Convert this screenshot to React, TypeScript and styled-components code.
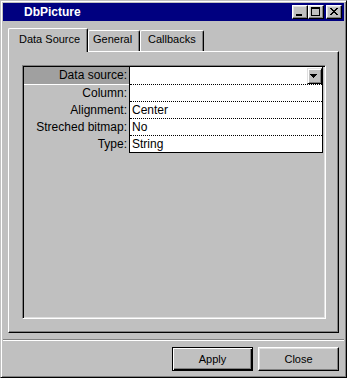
import React from 'react';
import styled, { createGlobalStyle } from 'styled-components';

const GlobalStyle = createGlobalStyle`
    html, body {
        margin: 0;
        padding: 0;
        background: #c0c0c0;
    }

    body {
        font-family: "Liberation Sans", Arial, sans-serif;
        color: #000;
    }
`;

const Window = styled.div`
    width: 347px;
    height: 378px;
    box-sizing: border-box;
    padding: 2px;

    display: flex;
    flex-direction: column;

    background: #c0c0c0;
    border: 1px solid;
    border-color: #c0c0c0 #000 #000 #c0c0c0;
    box-shadow: inset 1px 1px #fff, inset -1px -1px #808080;
`;

const TitleBar = styled.div`
    height: 18px;
    display: flex;
    align-items: center;
    padding: 0 2px 0 21px;

    background: #000080;
    color: #fff;
    font-size: 12px;
    font-weight: bold;
`;

const TitleText = styled.span`
    flex: 1;
    line-height: 18px;
`;

const CaptionButton = styled.button<{ $gap?: boolean }>`
    width: 16px;
    height: 14px;
    padding: 0;
    margin-left: ${(p) => (p.$gap ? '2px' : '0')};
    box-sizing: border-box;

    display: flex;

    background: #c0c0c0;
    border: 1px solid;
    border-color: #fff #000 #000 #fff;
    box-shadow: inset -1px -1px #808080, inset 1px 1px #dfdfdf;

    svg {
        display: block;
        shape-rendering: crispEdges;
    }
`;

const Body = styled.div`
    padding: 7px 5px 0 5px;
    display: flex;
    flex-direction: column;
`;

const TabStrip = styled.div`
    height: 23px;
    display: flex;
    align-items: flex-end;
`;

const Tab = styled.div<{ $active?: boolean; $width: number; $pad: number }>`
    position: relative;
    z-index: ${(p) => (p.$active ? 1 : 0)};
    width: ${(p) => p.$width}px;
    height: ${(p) => (p.$active ? 24 : 21)}px;
    margin-bottom: ${(p) => (p.$active ? '-1px' : '0')};
    box-sizing: border-box;
    padding: ${(p) => (p.$active ? 4 : 2)}px 0 0 ${(p) => p.$pad}px;

    background: #c0c0c0;
    border: 1px solid;
    border-color: #fff #000 transparent #fff;
    border-bottom: none;
    border-radius: 2px 2px 0 0;
    box-shadow: inset -1px 0 #808080;

    font-size: 11px;
    line-height: 13px;
    white-space: nowrap;
`;

const Panel = styled.div`
    box-sizing: border-box;
    padding: 13px 12px 13px 13px;

    background: #c0c0c0;
    border: 1px solid;
    border-color: #fff #000 #000 #fff;
    box-shadow: inset -1px -1px #808080;
`;

const Sunken = styled.div`
    height: 254px;
    box-sizing: border-box;
    padding: 1px;

    background: #c0c0c0;
    border: 1px solid;
    border-color: #808080 #fff #fff #808080;
    box-shadow: inset 1px 1px #000, inset -1px -1px #dfdfdf;
`;

const PropertyGrid = styled.div`
    display: grid;
    grid-template-columns: 105px 194px;
    font-size: 12px;
`;

const LabelColumn = styled.div`
    display: flex;
    flex-direction: column;
`;

const LabelCell = styled.div<{ $selected?: boolean; $first?: boolean }>`
    height: ${(p) => (p.$first ? 18 : 17)}px;
    box-sizing: border-box;
    padding-right: 2px;
    text-align: right;
    line-height: ${(p) => (p.$first ? 17 : 16)}px;
    white-space: nowrap;

    background: ${(p) => (p.$selected ? '#a0a0a0' : 'transparent')};
    border-bottom: 1px solid ${(p) => (p.$selected ? '#fff' : 'transparent')};
    margin-left: ${(p) => (p.$selected ? '0' : '0')};
`;

const ValueColumn = styled.div`
    display: flex;
    flex-direction: column;
    align-self: start;
    background: #fff;
    border: 1px solid #000;
    border-top: none;
`;

const ValueCell = styled.div<{ $first?: boolean; $last?: boolean }>`
    height: ${(p) => (p.$first ? 18 : p.$last ? 16 : 17)}px;
    box-sizing: border-box;
    padding-left: 2px;
    display: flex;
    align-items: flex-start;
    justify-content: space-between;

    line-height: ${(p) => (p.$first ? 17 : 16)}px;
    border-bottom: ${(p) => (p.$last ? 'none' : '1px dotted #000')};
`;

const ComboButton = styled.div`
    width: 15px;
    height: 16px;
    margin-top: 1px;
    box-sizing: border-box;

    background: #c0c0c0;
    border: 1px solid;
    border-color: #dfdfdf #000 #000 #dfdfdf;
    box-shadow: inset 1px 1px #fff, inset -1px -1px #808080;

    svg {
        display: block;
        shape-rendering: crispEdges;
    }
`;

const Separator = styled.div`
    margin-top: 6px;
    border-top: 1px solid #808080;
    border-bottom: 1px solid #fff;
`;

const ButtonRow = styled.div`
    padding: 6px 5px 0 0;
    display: flex;
    justify-content: flex-end;
    gap: 5px;
`;

const PushButton = styled.button<{ $default?: boolean }>`
    width: 81px;
    height: 24px;
    padding: 0;
    box-sizing: border-box;

    background: #c0c0c0;
    border: 1px solid;
    border-color: ${(p) => (p.$default ? '#000' : '#fff #000 #000 #fff')};
    box-shadow: ${(p) =>
        p.$default
            ? 'inset 1px 1px #fff, inset -1px -1px #000, inset -2px -2px #808080'
            : 'inset -1px -1px #808080, inset 1px 1px #dfdfdf'};

    font-family: "Liberation Sans", Arial, sans-serif;
    font-size: 11px;
    color: #000;
`;

const MinimizeIcon = () => (
    <svg width="14" height="12" viewBox="0 0 14 12">
        <rect x="3" y="8" width="6" height="2" fill="#000" />
    </svg>
);

const MaximizeIcon = () => (
    <svg width="14" height="12" viewBox="0 0 14 12">
        <rect x="2" y="1" width="9" height="2" fill="#000" />
        <rect x="2" y="3" width="1" height="7" fill="#000" />
        <rect x="10" y="3" width="1" height="7" fill="#000" />
        <rect x="2" y="9" width="9" height="1" fill="#000" />
    </svg>
);

const closeRows = [
    [0, 6],
    [1, 5],
    [2, 4],
    [3, 3],
    [2, 4],
    [1, 5],
    [0, 6],
];

const CloseIcon = () => (
    <svg width="14" height="12" viewBox="0 0 14 12">
        {closeRows.map(([a, b], i) =>
            a === b ? (
                <rect key={i} x={3 + a} y={2 + i} width="2" height="1" fill="#000" />
            ) : (
                <React.Fragment key={i}>
                    <rect x={3 + a} y={2 + i} width="2" height="1" fill="#000" />
                    <rect x={3 + b} y={2 + i} width="2" height="1" fill="#000" />
                </React.Fragment>
            ),
        )}
    </svg>
);

const DownArrow = () => (
    <svg width="13" height="14" viewBox="0 0 13 14">
        <rect x="2" y="5" width="7" height="1" fill="#000" />
        <rect x="3" y="6" width="5" height="1" fill="#000" />
        <rect x="4" y="7" width="3" height="1" fill="#000" />
        <rect x="5" y="8" width="1" height="1" fill="#000" />
    </svg>
);

const tabs = [
    { title: 'Data Source', width: 80, pad: 10 },
    { title: 'General', width: 52, pad: 4 },
    { title: 'Callbacks', width: 64, pad: 7 },
];

const rows = [
    { label: 'Data source:', value: '', combo: true },
    { label: 'Column:', value: '' },
    { label: 'Alignment:', value: 'Center' },
    { label: 'Streched bitmap:', value: 'No' },
    { label: 'Type:', value: 'String' },
];

const App = (): React.ReactElement => {
    return (
        <>
            <GlobalStyle />
            <Window>
                <TitleBar>
                    <TitleText>DbPicture</TitleText>
                    <CaptionButton>
                        <MinimizeIcon />
                    </CaptionButton>
                    <CaptionButton>
                        <MaximizeIcon />
                    </CaptionButton>
                    <CaptionButton $gap>
                        <CloseIcon />
                    </CaptionButton>
                </TitleBar>

                <Body>
                    <TabStrip>
                        {tabs.map((tab, index) => (
                            <Tab
                                key={tab.title}
                                $active={index === 0}
                                $width={tab.width}
                                $pad={tab.pad}
                            >
                                {tab.title}
                            </Tab>
                        ))}
                    </TabStrip>

                    <Panel>
                        <Sunken>
                            <PropertyGrid>
                                <LabelColumn>
                                    {rows.map((row, index) => (
                                        <LabelCell
                                            key={row.label}
                                            $first={index === 0}
                                            $selected={index === 0}
                                        >
                                            {row.label}
                                        </LabelCell>
                                    ))}
                                </LabelColumn>

                                <ValueColumn>
                                    {rows.map((row, index) => (
                                        <ValueCell
                                            key={row.label}
                                            $first={index === 0}
                                            $last={index === rows.length - 1}
                                        >
                                            <span>{row.value}</span>
                                            {row.combo && (
                                                <ComboButton>
                                                    <DownArrow />
                                                </ComboButton>
                                            )}
                                        </ValueCell>
                                    ))}
                                </ValueColumn>
                            </PropertyGrid>
                        </Sunken>
                    </Panel>
                </Body>

                <Separator />

                <ButtonRow>
                    <PushButton $default>Apply</PushButton>
                    <PushButton>Close</PushButton>
                </ButtonRow>
            </Window>
        </>
    );
};

export default App;
